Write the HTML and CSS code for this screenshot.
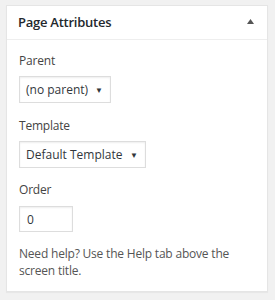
FILE: index.html
```html
<!DOCTYPE html>
<html>
<head>
<meta charset="utf-8">
<link rel="stylesheet" href="styles.css">
</head>
<body>
<div class="panel">
  <div class="panel-head">
    <h2 class="panel-title">Page Attributes</h2>
    <svg class="toggle" width="7" height="5" viewBox="0 0 7 5"><polygon points="3.5,0 7,5 0,5" fill="#555"/></svg>
  </div>
  <div class="panel-body">
    <p class="label label-first">Parent</p>
    <div class="select select-parent"><span class="select-text">(no parent)</span><span class="caret">&#9660;</span></div>
    <p class="label">Template</p>
    <div class="select select-template"><span class="select-text">Default Template</span><span class="caret">&#9660;</span></div>
    <p class="label label-order">Order</p>
    <div class="input">0</div>
    <p class="help">Need help? Use the Help tab above the screen title.</p>
  </div>
</div>
</body>
</html>
```
FILE: styles.css
```css
html, body {
  margin: 0;
  padding: 0;
}
body {
  background: #f1f1f1;
  font-family: "Open Sans", "Noto Sans", sans-serif;
  color: #444;
  padding: 5px 7px 0 6px;
  height: 300px;
  box-sizing: border-box;
}
.panel {
  background: #fff;
  border: 1px solid #e5e5e5;
  box-shadow: 0 1px 1px rgba(0,0,0,.04);
}
.panel-head {
  height: 33px;
  border-bottom: 1px solid #eee;
  display: flex;
  align-items: center;
  justify-content: space-between;
  padding: 0 13px 0 11px;
}
.panel-title {
  margin: 0;
  font-size: 13px;
  font-weight: 600;
  color: #23282d;
  line-height: 33px;
  letter-spacing: -0.25px;
}
.toggle {
  display: block;
  margin-top: -2px;
}
.panel-body {
  padding: 13px 12px 12px 12px;
}
.label {
  margin: 15px 0 7px 0;
  font-size: 12px;
  line-height: 16px;
  color: #444;
  letter-spacing: -0.2px;
}
.label-first {
  margin-top: 0;
}
.label-order {
  margin-top: 14px;
  margin-bottom: 8px;
}
.select, .input {
  box-sizing: border-box;
  height: 27px;
  border: 1px solid #ddd;
  box-shadow: inset 0 1px 2px rgba(0,0,0,.07);
  display: flex;
  align-items: center;
  font-size: 12px;
  color: #32373c;
  background: #fff;
}
.select {
  padding: 0 0 0 6px;
  justify-content: space-between;
}
.select-parent {
  width: 92px;
}
.select-template {
  width: 127px;
}
.caret {
  font-size: 8px;
  color: #32373c;
  margin-right: 7px;
}
.input {
  width: 54px;
  height: 26px;
  padding-left: 7px;
}
.help {
  margin: 13px 0 0 0;
  font-size: 12px;
  line-height: 17px;
  color: #555;
  letter-spacing: -0.2px;
}
```
